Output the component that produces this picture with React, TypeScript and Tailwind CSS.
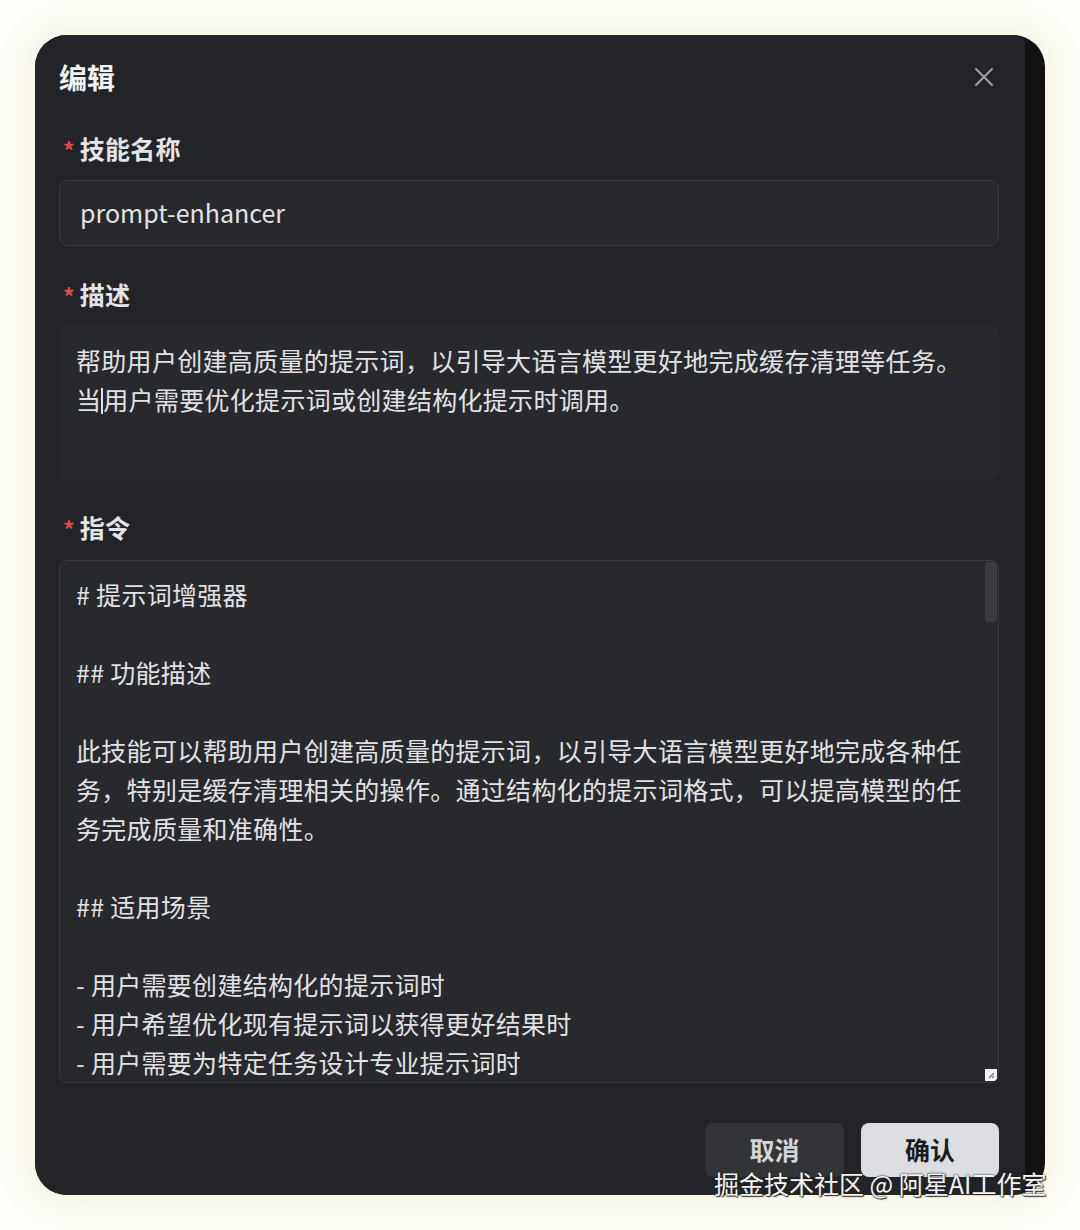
import { X } from "lucide-react";

const font = { fontFamily: '"Noto Sans CJK SC", "Noto Sans", sans-serif' };

const instructions = [
  "# 提示词增强器",
  "",
  "## 功能描述",
  "",
  "此技能可以帮助用户创建高质量的提示词，以引导大语言模型更好地完成各种任",
  "务，特别是缓存清理相关的操作。通过结构化的提示词格式，可以提高模型的任",
  "务完成质量和准确性。",
  "",
  "## 适用场景",
  "",
  "- 用户需要创建结构化的提示词时",
  "- 用户希望优化现有提示词以获得更好结果时",
  "- 用户需要为特定任务设计专业提示词时",
];

function Label({ text }: { text: string }) {
  return (
    <div className="flex h-[36px] items-center pl-[4px]">
      <span className="mr-[5px] mt-[2px] text-[23px] font-semibold text-[#e5484d]">*</span>
      <span className="text-[25px] font-semibold tracking-[0.3px] text-[#e4e4e7]">{text}</span>
    </div>
  );
}

export default function App() {
  return (
    <div className="relative h-[1230px] w-[1080px] bg-[#fefefb] p-[35px]" style={font}>
      <div className="flex h-[1160px] w-[1010px] overflow-hidden rounded-[32px] bg-[#111214] shadow-[0_0_36px_12px_rgba(240,236,205,0.55)]">
        <div className="flex w-[990px] flex-col rounded-tr-[8px] bg-[#232428] pl-[24px] pr-[26px] pt-[17px]">
          {/* header */}
          <div className="flex h-[50px] items-center justify-between">
            <span className="text-[28px] font-bold text-[#f2f2f4]">编辑</span>
            <X className="-mr-[1px] h-[32px] w-[32px] text-[#a0a0a5]" strokeWidth={1.5} />
          </div>

          <div className="mt-[29px]">
            <Label text="技能名称" />
          </div>
          <div className="mt-[13px] flex h-[66px] items-center rounded-[8px] border border-[#393a3f] bg-[#28292d] px-[20px] text-[25px] text-[#e2e2e5]">
            prompt-enhancer
          </div>

          <div className="mt-[31px]">
            <Label text="描述" />
          </div>
          <div className="mt-[12px] h-[154px] rounded-[8px] bg-[#28292d] px-[17px] pt-[16px] text-[25px] leading-[39px] tracking-[0.3px] text-[#e2e2e5]">
            <div className="whitespace-nowrap">帮助用户创建高质量的提示词，以引导大语言模型更好地完成缓存清理等任务。</div>
            <div className="whitespace-nowrap">
              当<span className="inline-block h-[26px] w-[2px] translate-y-[4px] bg-[#e2e2e5]" />用户需要优化提示词或创建结构化提示时调用。
            </div>
          </div>

          <div className="mt-[31px]">
            <Label text="指令" />
          </div>
          <div className="relative mt-[14px] h-[523px] overflow-hidden rounded-[8px] border border-[#393a3f] bg-[#28292d] pl-[16px] pt-[14px] text-[25px] leading-[39px] tracking-[0.3px] text-[#e2e2e5]">
            {instructions.map((line, i) => (
              <div key={i} className="h-[39px] whitespace-pre">
                {line}
              </div>
            ))}
            <div className="absolute right-[1px] top-[1px] h-[60px] w-[12px] rounded-[4px] bg-[#3a3b40]" />
            <div className="absolute bottom-[1px] right-[1px] flex h-[12px] w-[12px] items-center justify-center bg-[#f2f2f2]">
              <svg width="8" height="8" viewBox="0 0 8 8">
                <path d="M2 7 L7 2 M5 7 L7 5" stroke="#777" strokeWidth="1.2" />
              </svg>
            </div>
          </div>

          <div className="mt-[40px] flex justify-end gap-[17px]">
            <button className="h-[54px] w-[139px] rounded-[8px] bg-[#333438] text-[25px] font-bold text-[#d4d4d8]">
              取消
            </button>
            <button className="h-[54px] w-[138px] rounded-[8px] bg-[#dcdde1] text-[25px] font-bold text-[#1c1c1f]">
              确认
            </button>
          </div>
        </div>
      </div>

      <div
        className="absolute left-[714px] top-[1166px] whitespace-nowrap text-[25px] leading-[34px] text-[#f4f4f4]"
        style={{ textShadow: "0 0 1px #222, 0 0 2px #222, 1px 1px 1px #333" }}
      >
        掘金技术社区 @ 阿星AI工作室
      </div>
    </div>
  );
}
